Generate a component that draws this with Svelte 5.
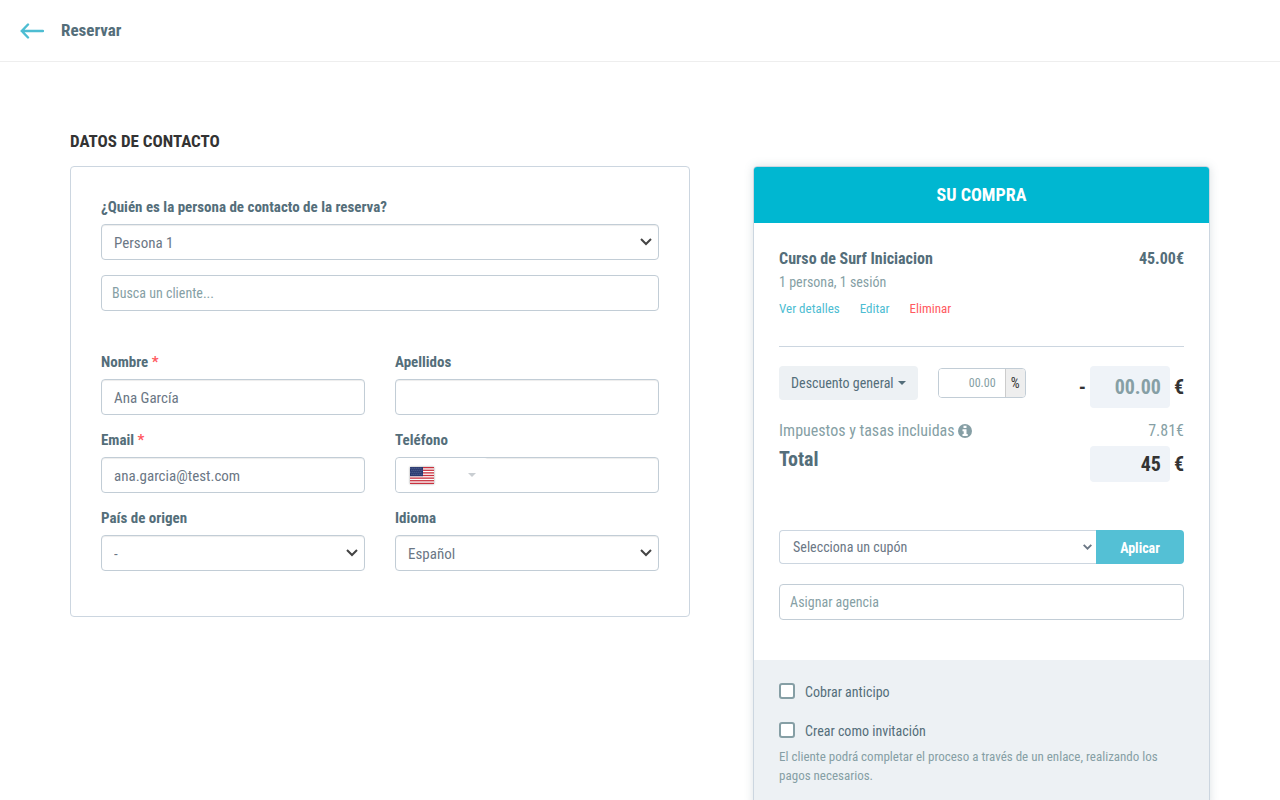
<script>
	let contact = 'Persona 1';
	let client = '';
	let name = 'Ana García';
	let surname = '';
	let email = 'ana.garcia@test.com';
	let phone = '';
	let country = '-';
	let language = 'Español';

	let percent = '';
	let discount = '';
	let total = '45';
	let coupon = 'Selecciona un cupón';
	let agency = '';
	let deposit = false;
	let invitation = false;

	const stripes = [0, 2, 4, 6, 8, 10, 12];

	const stars = [];
	for (let y = 1; y < 9; y += 2) {
		for (let x = 1; x < 13; x += 2) {
			stars.push({ x: x + (y % 4 === 1 ? 0 : 1), y });
		}
	}
</script>

{#snippet chevron()}
	<svg class="chevron" width="12" height="8" viewBox="0 0 12 8" aria-hidden="true">
		<path d="M1 1l5 5 5-5" fill="none" stroke="currentColor" stroke-width="2" />
	</svg>
{/snippet}

<header class="topbar">
	<a class="back" href="#back" aria-label="Volver">
		<svg width="24" height="16" viewBox="0 0 24 16" aria-hidden="true">
			<path d="M8 1.5L1.8 8 8 14.5M2 8h21" fill="none" stroke="currentColor" stroke-width="2.4" stroke-linecap="round" />
		</svg>
	</a>
	<h1>Reservar</h1>
</header>

<main>
	<h2>DATOS DE CONTACTO</h2>

	<form class="contact">
		<div class="field">
			<label for="contact">¿Quién es la persona de contacto de la reserva?</label>
			<div class="select">
				<select id="contact" class="control" bind:value={contact}>
					<option>Persona 1</option>
				</select>
				{@render chevron()}
			</div>
		</div>
		<input class="control search" type="text" aria-label="Cliente" placeholder="Busca un cliente..." bind:value={client} />

		<div class="fields">
			<div class="field">
				<label for="name">Nombre <span class="required">*</span></label>
				<input id="name" class="control" type="text" bind:value={name} />
			</div>
			<div class="field">
				<label for="surname">Apellidos</label>
				<input id="surname" class="control" type="text" bind:value={surname} />
			</div>
			<div class="field">
				<label for="email">Email <span class="required">*</span></label>
				<input id="email" class="control" type="email" bind:value={email} />
			</div>
			<div class="field">
				<label for="phone">Teléfono</label>
				<div class="control phone">
					<button type="button" class="prefix" aria-label="Prefijo">
						<svg class="flag" width="24" height="17" viewBox="0 0 24 17" aria-hidden="true">
							<rect width="24" height="17" fill="#fff" />
							{#each stripes as row}
								<rect y={row * 17 / 13} width="24" height="1.31" fill="#c8313e" />
							{/each}
							<rect width="13" height="9.2" fill="#28386f" />
							{#each stars as star}
								<rect x={star.x - 0.5} y={star.y - 0.2} width="0.8" height="0.8" fill="#8d97ba" />
							{/each}
						</svg>
						<svg width="8" height="4" viewBox="0 0 8 4" aria-hidden="true">
							<path d="M0 0h8L4 4z" fill="#c9ced2" />
						</svg>
					</button>
					<input id="phone" type="tel" bind:value={phone} />
				</div>
			</div>
			<div class="field">
				<label for="country">País de origen</label>
				<div class="select">
					<select id="country" class="control" bind:value={country}>
						<option>-</option>
					</select>
					{@render chevron()}
				</div>
			</div>
			<div class="field">
				<label for="language">Idioma</label>
				<div class="select">
					<select id="language" class="control" bind:value={language}>
						<option>Español</option>
					</select>
					{@render chevron()}
				</div>
			</div>
		</div>
	</form>

	<aside class="cart">
		<h2 class="cart-title">SU COMPRA</h2>

		<div class="cart-body">
			<div class="item">
				<div class="line item-name">
					<span>Curso de Surf Iniciacion</span>
					<span>45.00€</span>
				</div>
				<div class="item-detail">1 persona, 1 sesión</div>
				<div class="links">
					<a href="#detalles">Ver detalles</a>
					<a href="#editar">Editar</a>
					<a class="danger" href="#eliminar">Eliminar</a>
				</div>
			</div>

			<div class="line discount">
				<button type="button" class="dropdown">
					Descuento general
					<svg width="8" height="4" viewBox="0 0 8 4" aria-hidden="true">
						<path d="M0 0h8L4 4z" fill="currentColor" />
					</svg>
				</button>
				<div class="percent">
					<input type="text" aria-label="Porcentaje de descuento" placeholder="00.00" bind:value={percent} />
					<span>%</span>
				</div>
				<div class="amount">
					<span>-</span>
					<input class="tall" type="text" aria-label="Descuento" placeholder="00.00" bind:value={discount} />
					<span>€</span>
				</div>
			</div>

			<div class="line taxes">
				<span class="taxes-label">
					Impuestos y tasas incluidas
					<svg width="14" height="14" viewBox="0 0 14 14" aria-hidden="true">
						<circle cx="7" cy="7" r="7" fill="currentColor" />
						<path d="M5.5 1.800h3v2.200h-3zM4.500 5.200h4v4.800h1.200v2H4.500v-2h1.200V7.200H4.500z" fill="#fff" />
					</svg>
				</span>
				<span>7.81€</span>
			</div>
			<div class="line total">
				<label for="total">Total</label>
				<div class="amount">
					<input id="total" type="text" bind:value={total} />
					<span>€</span>
				</div>
			</div>

			<div class="coupon">
				<div class="select">
					<select aria-label="Cupón" bind:value={coupon}>
						<option>Selecciona un cupón</option>
					</select>
					<svg class="chevron" width="9" height="6" viewBox="0 0 9 6" aria-hidden="true">
						<path d="M0.700 0.800l3.800 3.800 3.800-3.800" fill="none" stroke="currentColor" stroke-width="1.900" />
					</svg>
				</div>
				<button type="button">Aplicar</button>
			</div>

			<input class="control search" type="text" aria-label="Agencia" placeholder="Asignar agencia" bind:value={agency} />
		</div>

		<div class="cart-options">
			<label class="check">
				<input type="checkbox" bind:checked={deposit} />
				Cobrar anticipo
			</label>
			<label class="check">
				<input type="checkbox" bind:checked={invitation} />
				Crear como invitación
			</label>
			<p>El cliente podrá completar el proceso a través de un enlace, realizando los pagos necesarios.</p>
		</div>
	</aside>
</main>

<style>
	:global(body) {
		margin: 0;
		background: #fff;
		color: #333;
		font-family: 'Roboto Condensed', 'Liberation Sans Narrow', Roboto, sans-serif;
		font-size: 14px;
		line-height: 20px;
	}

	:global(*) {
		box-sizing: border-box;
	}

	h1,
	h2,
	p {
		margin: 0;
	}

	a {
		color: #4dbdd2;
		text-decoration: none;
	}

	input,
	select,
	button {
		min-width: 0;
		margin: 0;
		font-family: inherit;
	}

	button {
		border: 0;
		cursor: pointer;
	}

	.topbar {
		display: flex;
		align-items: center;
		gap: 17px;
		height: 62px;
		padding: 0 20px;
		border-bottom: 1px solid #eee;
	}

	.back {
		display: flex;
	}

	h1 {
		padding-bottom: 2px;
		color: #546e7a;
		font-size: 17px;
		line-height: 24px;
	}

	main {
		display: grid;
		grid-template-columns: 19fr 14fr;
		column-gap: 63px;
		align-items: start;
		max-width: 1140px;
		margin: 0 auto;
		padding-top: 69px;
	}

	h2 {
		grid-column: 1 / -1;
		margin-bottom: 15px;
		font-size: 17px;
		line-height: 20px;
	}

	.contact {
		padding: 30px 30px 45px;
		border: 1px solid #ccd6e0;
		border-radius: 4px;
	}

	.field {
		display: flex;
		flex-direction: column;
		gap: 7px;
		color: #546e7a;
		font-size: 15px;
		font-weight: bold;
	}

	.required {
		color: #ff5a5f;
	}

	.control {
		width: 100%;
		height: 36px;
		padding: 2px 12px 0;
		border: 1px solid #c2cdd6;
		border-radius: 4px;
		background: #fff;
		box-shadow: inset 0 1px 1px rgba(0, 0, 0, 0.075);
		color: #6b7785;
		font-size: 15px;
		font-weight: normal;
	}

	.search {
		padding: 0 10px;
		box-shadow: none;
		font-size: 14px;
	}

	.contact .search {
		margin-top: 15px;
	}

	::placeholder {
		color: #869fa5;
		opacity: 1;
	}

	.select {
		display: grid;
		align-items: center;
		color: #444;
	}

	.select select,
	.chevron {
		grid-area: 1 / 1;
	}

	.select select {
		appearance: none;
	}

	.chevron {
		justify-self: end;
		margin-right: 7px;
		pointer-events: none;
	}

	.fields {
		display: grid;
		grid-template-columns: repeat(2, minmax(0, 1fr));
		gap: 15px 30px;
		margin-top: 41px;
	}

	.phone {
		display: flex;
		padding: 0;
	}

	.phone input {
		flex: 1;
		border: 0;
		background: none;
		font-size: 15px;
	}

	.prefix {
		display: flex;
		align-items: center;
		justify-content: space-between;
		width: 92px;
		padding: 0 12px 0 14px;
		border-radius: 4px;
		background: #fff;
	}

	.flag {
		box-shadow: 0 0 2px rgba(0, 0, 0, 0.4);
	}

	.cart {
		border: 1px solid #ccd6e0;
		border-radius: 4px;
		box-shadow: 0 0 10px rgba(84, 110, 122, 0.2);
		overflow: hidden;
	}

	.cart-title {
		margin: 0;
		padding: 18px;
		background: #00b7d1;
		color: #fff;
		font-size: 18px;
		text-align: center;
	}

	.cart-body {
		padding: 24px 25px 40px;
	}

	.line {
		display: flex;
		justify-content: space-between;
	}

	.item {
		padding-bottom: 27px;
		border-bottom: 1px solid #ccd6e0;
	}

	.item-name {
		color: #546e7a;
		font-size: 16px;
		font-weight: bold;
		line-height: 24px;
	}

	.item-detail {
		margin-top: 1px;
		color: #869fa5;
	}

	.links {
		display: flex;
		gap: 20px;
		margin-top: 7px;
		font-size: 13px;
	}

	.links .danger {
		color: #ff5a5f;
	}

	.discount {
		gap: 20px;
		margin-top: 19px;
	}

	.dropdown {
		display: flex;
		align-items: center;
		gap: 4px;
		height: 34px;
		padding: 0 12px;
		border-radius: 4px;
		background: #edf1f4;
		color: #546e7a;
		font-size: 14px;
		white-space: nowrap;
	}

	.percent {
		display: flex;
		width: 88px;
		height: 30px;
		margin: 2px auto 0 0;
		border: 1px solid #c2cdd6;
		border-radius: 4px;
		overflow: hidden;
	}

	.percent input {
		flex: 1;
		padding: 0 9px;
		border: 0;
		font-size: 12px;
		text-align: right;
	}

	.percent span {
		width: 20px;
		border-left: 1px solid #ccc;
		background: #eee;
		line-height: 28px;
		text-align: center;
	}

	.amount {
		display: flex;
		align-items: center;
		gap: 4px;
		font-size: 20px;
		font-weight: bold;
	}

	.amount input {
		width: 80px;
		height: 36px;
		padding: 0 9px;
		border: 0;
		border-radius: 4px;
		background: #eff3f8;
		color: #333;
		font-size: 20px;
		font-weight: bold;
		text-align: right;
	}

	.amount .tall {
		height: 42px;
	}

	.taxes {
		margin-top: 12px;
		color: #869fa5;
		font-size: 16px;
		line-height: 22px;
	}

	.taxes-label {
		display: flex;
		align-items: center;
		gap: 3px;
	}

	.total {
		margin-top: 4px;
	}

	.total label {
		color: #546e7a;
		font-size: 20px;
		font-weight: bold;
		line-height: 26px;
	}

	.coupon {
		display: flex;
		margin: 48px 0 20px;
	}

	.coupon .select {
		flex: 1;
		color: #6b7785;
	}

	.coupon select {
		height: 34px;
		padding: 0 13px;
		border: 1px solid #ccd6e0;
		border-right: 0;
		border-radius: 4px 0 0 4px;
		background: #fff;
		color: #6b7785;
		font-size: 14px;
	}

	.coupon .chevron {
		margin-right: 4px;
	}

	.coupon button {
		width: 88px;
		padding: 2px 0 0;
		border-radius: 0 4px 4px 0;
		background: #54c0d5;
		color: #fff;
		font-size: 14px;
		font-weight: bold;
	}

	.cart-options {
		padding: 22px 25px;
		background: #edf1f4;
	}

	.check {
		display: flex;
		align-items: center;
		gap: 10px;
		margin-bottom: 19px;
		color: #546e7a;
	}

	.check input {
		appearance: none;
		width: 16px;
		height: 16px;
		margin-bottom: 2px;
		border: 2px solid #869fa5;
		border-radius: 3px;
		background: #fff;
	}

	.check input:checked {
		background: #869fa5;
	}

	.cart-options p {
		margin-top: -13px;
		color: #869fa5;
		font-size: 13px;
		line-height: 19px;
	}
</style>
